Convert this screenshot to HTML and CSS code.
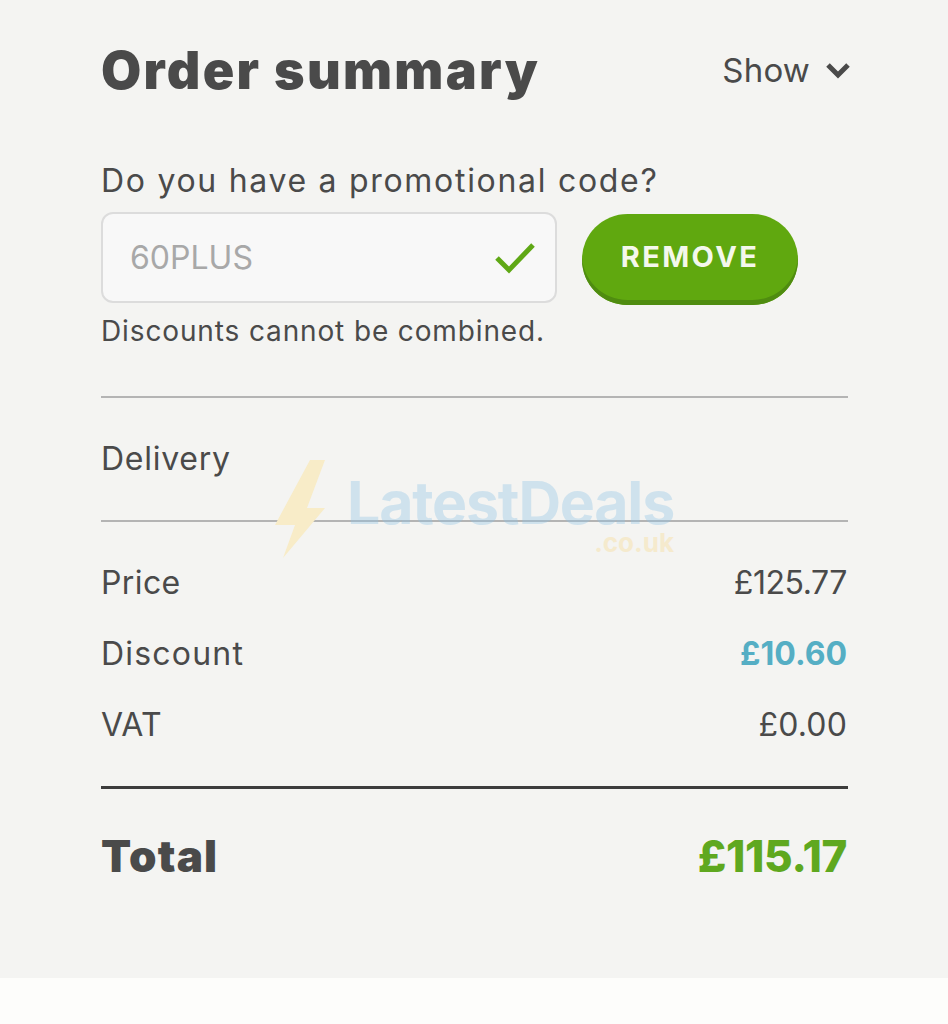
FILE: index.html
```html
<!DOCTYPE html>
<html lang="en-GB">
<head>
    <meta charset="UTF-8">
    <meta name="viewport" content="width=device-width, initial-scale=1.0">
    <title>Order summary</title>
    <link rel="stylesheet" href="styles.css">
</head>
<body>
    <div class="summary">
        <div class="summary-head">
            <h1>Order summary</h1>
            <div class="toggle">
                <span>Show</span>
                <svg width="26" height="18" viewBox="0 0 26 18"><path d="M3 4l10 10L23 4" fill="none" stroke="#4a4a4a" stroke-width="5"/></svg>
            </div>
        </div>

        <p class="promo-label">Do you have a promotional code?</p>
        <div class="promo-row">
            <div class="promo-input">
                <span>60PLUS</span>
                <svg width="42" height="32" viewBox="0 0 42 32"><path d="M3 16l12 12L39 3" fill="none" stroke="#5fa815" stroke-width="5"/></svg>
            </div>
            <button class="remove-btn">REMOVE</button>
        </div>
        <p class="promo-note">Discounts cannot be combined.</p>

        <div class="delivery">Delivery</div>

        <div class="prices">
            <div class="price-row"><span class="price-name">Price</span><span class="price-value">£125.77</span></div>
            <div class="price-row"><span class="price-name discount-name">Discount</span><span class="discount">£10.60</span></div>
            <div class="price-row"><span class="price-name">VAT</span><span class="vat-value">£0.00</span></div>
        </div>

        <div class="total">
            <span class="total-name">Total</span>
            <span class="total-value">£115.17</span>
        </div>
    </div>

    <div class="watermark">
        <svg width="52" height="100" viewBox="0 0 52 100"><path d="M35 0h15L32 48h18L8 98l12-33H0z" fill="#f8ecc8"/></svg>
        <div class="watermark-text">
            <div class="watermark-name">LatestDeals</div>
            <div class="watermark-tld">.co.uk</div>
        </div>
    </div>
</body>
</html>
```

FILE: styles.css
```css
* {
    box-sizing: border-box;
}
body {
    margin: 0;
    background-color: #fdfdfb;
    font-family: Inter, "Liberation Sans", sans-serif;
    color: #4a4a4a;
    height: 1024px;
    overflow: hidden;
    position: relative;
}
p {
    margin: 0;
}
.summary {
    height: 978px;
    padding: 37px 100px 0 101px;
    background-color: #f4f4f2;
}
.summary-head {
    display: flex;
    justify-content: space-between;
    align-items: center;
    height: 68px;
}
h1 {
    margin: 0;
    font-size: 52px;
    font-weight: 900;
    letter-spacing: 2.3px;
    line-height: 68px;
}
.toggle {
    display: flex;
    align-items: center;
    gap: 15px;
    font-size: 33px;
    letter-spacing: 0.2px;
    margin-top: -2px;
    margin-right: -3px;
}
.promo-label {
    margin-top: 56px;
    font-size: 32px;
    letter-spacing: 1.7px;
    line-height: 40px;
}
.promo-row {
    display: flex;
    align-items: flex-start;
    gap: 25px;
    margin-top: 11px;
}
.promo-input {
    display: flex;
    justify-content: space-between;
    align-items: center;
    width: 456px;
    height: 91px;
    padding: 0 19px 0 27px;
    background-color: #f8f8f8;
    border: 2px solid #dcdcdc;
    border-radius: 12px;
    font-size: 32px;
    color: #a8a8a8;
}
.remove-btn {
    width: 216px;
    height: 91px;
    margin-top: 2px;
    border: 0;
    border-radius: 46px;
    background-color: #60a80f;
    box-shadow: inset 0 -5px 0 #4f8c10;
    font-family: inherit;
    font-size: 29px;
    font-weight: 700;
    letter-spacing: 2.4px;
    color: #f4f8ec;
    padding: 0 0 6px;
}
.promo-note {
    margin-top: 8px;
    font-size: 28px;
    letter-spacing: 0.87px;
    line-height: 36px;
}
.delivery {
    margin-top: 47px;
    height: 126px;
    border-top: 2px solid #b4b4b4;
    border-bottom: 2px solid #b4b4b4;
    font-size: 32px;
    letter-spacing: 0.75px;
    line-height: 122px;
}
.prices {
    padding-top: 25px;
    padding-bottom: 26px;
    border-bottom: 3px solid #3c3c3c;
}
.price-row {
    display: flex;
    justify-content: space-between;
    align-items: center;
    height: 71px;
    padding-right: 1px;
    font-size: 32px;
}
.price-name {
    letter-spacing: 0.4px;
}
.discount-name {
    letter-spacing: 1.2px;
}
.price-value {
    letter-spacing: -0.45px;
}
.vat-value {
    letter-spacing: 0.15px;
}
.discount {
    font-weight: 700;
    color: #55aec4;
}
.total {
    display: flex;
    justify-content: space-between;
    align-items: center;
    margin-top: 32px;
    padding-right: 1px;
    font-size: 44px;
    font-weight: 900;
    line-height: 70px;
}
.total-name {
    letter-spacing: 1.2px;
}
.total-value {
    font-weight: 800;
    letter-spacing: -0.4px;
    color: #5fa81f;
}
.watermark {
    position: absolute;
    left: 275px;
    top: 460px;
    display: flex;
    gap: 20px;
    pointer-events: none;
}
.watermark-text {
    margin-top: 15px;
}
.watermark-name {
    font-size: 59px;
    font-weight: 700;
    letter-spacing: -1.2px;
    line-height: 56px;
    color: #8fc4e6;
    opacity: 0.36;
}
.watermark-tld {
    margin-top: 2px;
    text-align: right;
    font-size: 26px;
    font-weight: 700;
    line-height: 20px;
    color: #f6e3b0;
    opacity: 0.55;
}
```
